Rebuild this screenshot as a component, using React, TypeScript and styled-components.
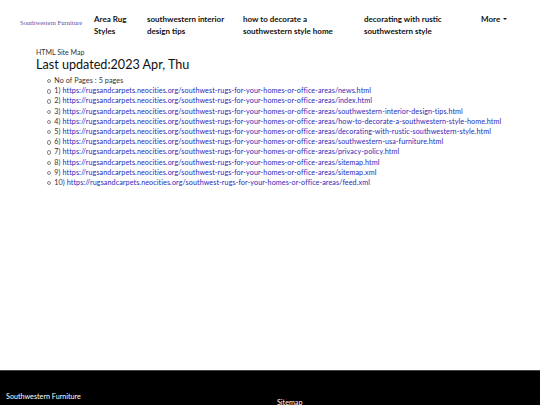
import React from "react";
import styled, { createGlobalStyle } from "styled-components";

const Global = createGlobalStyle`
  html, body { margin: 0; padding: 0; background: #fff; }
  body { font-family: Lato, "Noto Sans", sans-serif; }
  * { box-sizing: border-box; }
`;

const Page = styled.div`
  min-height: 405px;
  display: flex;
  flex-direction: column;
`;

const Header = styled.header`
  display: flex;
  align-items: flex-start;
  padding: 13px 0 0 20px;
  height: 47px;
`;

const Brand = styled.a`
  font-family: "Liberation Serif", serif;
  font-size: 6.6px;
  color: #5a4fa8;
  text-decoration: none;
  margin-top: 6px;
  width: 74px;
  white-space: nowrap;
`;

const Nav = styled.nav`
  display: flex;
  align-items: flex-start;
`;

const NavItem = styled.a<{ $w: number }>`
  width: ${(p) => p.$w}px;
  font-size: 8px;
  font-weight: 700;
  line-height: 12px;
  color: #111;
  text-decoration: none;
`;

const Caret = styled.span`
  display: inline-block;
  margin-left: 3px;
  vertical-align: 2px;
  border-left: 2px solid transparent;
  border-right: 2px solid transparent;
  border-top: 2px solid #111;
`;

const Main = styled.main`
  flex: 1;
  padding: 0 0 0 36px;
`;

const Small = styled.div`
  font-size: 7px;
  color: #333;
  line-height: 10px;
`;

const Title = styled.h1`
  margin: 0 0 4px 0;
  font-size: 12.6px;
  font-weight: 400;
  line-height: 15px;
  color: #111;
`;

const List = styled.ul`
  margin: 0;
  padding-left: 11px;
  list-style: none;
  font-size: 7.2px;
  letter-spacing: 0.08px;
  line-height: 10.2px;
  color: #333;
`;

const Item = styled.li`
  display: flex;
  align-items: center;
  white-space: nowrap;
  &::before {
    content: "";
    width: 2.4px;
    height: 2.4px;
    border: 0.6px solid #888;
    border-radius: 50%;
    margin-right: 2.8px;
    flex: none;
  }
`;

const Link = styled.a`
  color: #2a2ab8;
  text-decoration: none;
  margin-left: 2px;
`;

const Footer = styled.footer`
  background: #000;
  border-top: 1px solid #444;
  height: 35px;
  display: flex;
  align-items: flex-start;
  color: #fff;
  font-size: 7.2px;
`;

const FooterBrand = styled.div`
  margin: 21px 0 0 6px;
  width: 271px;
`;

const FooterLink = styled.div`
  margin-top: 27px;
`;

const base = "https://rugsandcarpets.neocities.org/southwest-rugs-for-your-homes-or-office-areas/";
const pages = [
  "news.html",
  "index.html",
  "southwestern-interior-design-tips.html",
  "how-to-decorate-a-southwestern-style-home.html",
  "decorating-with-rustic-southwestern-style.html",
  "southwestern-usa-furniture.html",
  "privacy-policy.html",
  "sitemap.html",
  "sitemap.xml",
  "feed.xml",
];

export default function App() {
  return (
    <>
      <Global />
      <Page>
        <Header>
          <Brand href="#">Southwestern Furniture</Brand>
          <Nav>
            <NavItem $w={53} href="#">Area Rug<br />Styles</NavItem>
            <NavItem $w={96} href="#">southwestern interior<br />design tips</NavItem>
            <NavItem $w={121} href="#">how to decorate a<br />southwestern style home</NavItem>
            <NavItem $w={117} href="#">decorating with rustic<br />southwestern style</NavItem>
            <NavItem $w={40} href="#">More<Caret /></NavItem>
          </Nav>
        </Header>
        <Main>
          <Small>HTML Site Map</Small>
          <Title>Last updated:2023 Apr, Thu</Title>
          <List>
            <Item>No of Pages : 5 pages</Item>
            {pages.map((p, i) => (
              <Item key={p}>
                {i + 1})<Link href="#">{base + p}</Link>
              </Item>
            ))}
          </List>
        </Main>
        <Footer>
          <FooterBrand>Southwestern Furniture</FooterBrand>
          <FooterLink>Sitemap</FooterLink>
        </Footer>
      </Page>
    </>
  );
}
